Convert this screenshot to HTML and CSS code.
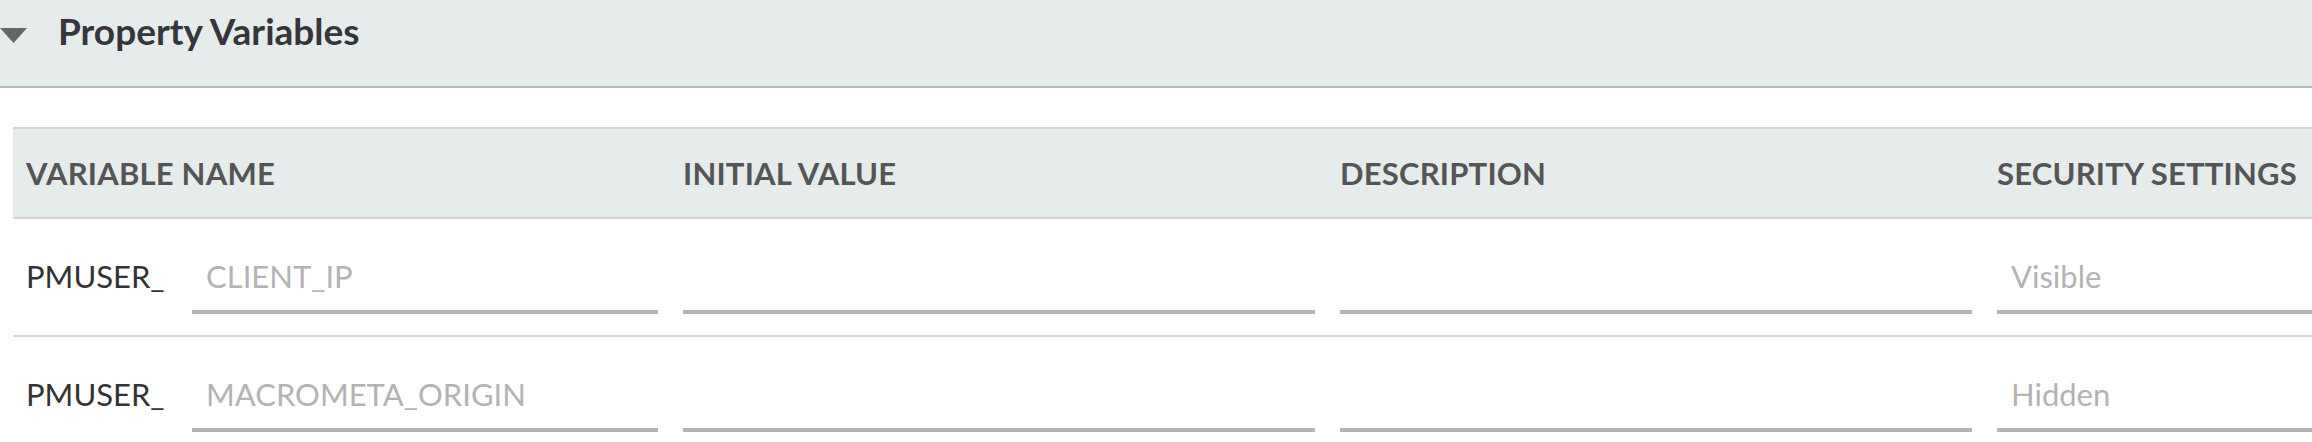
FILE: index.html
```html
<!DOCTYPE html>
<html lang="en">
<head>
<meta charset="utf-8">
<title>Property Variables</title>
<link rel="stylesheet" href="styles.css">
</head>
<body>
<div class="panel">
  <div class="section-header">
    <svg class="caret" width="27" height="15" viewBox="0 0 27 15" aria-hidden="true"><polygon points="0,0 27,0 13.5,15" fill="#666666"/></svg>
    <h2 class="section-title">Property Variables</h2>
  </div>
  <div class="table-wrap">
    <table class="vars">
      <colgroup>
        <col class="col"><col class="col"><col class="col"><col class="col">
      </colgroup>
      <thead>
        <tr>
          <th>VARIABLE NAME</th>
          <th>INITIAL VALUE</th>
          <th>DESCRIPTION</th>
          <th>SECURITY SETTINGS</th>
        </tr>
      </thead>
      <tbody>
        <tr>
          <td><div class="name-cell"><span class="prefix">PMUSER_</span><div class="field"><span class="placeholder">CLIENT_IP</span></div></div></td>
          <td><div class="field"></div></td>
          <td><div class="field"></div></td>
          <td><div class="field"><span class="placeholder">Visible</span></div></td>
        </tr>
        <tr>
          <td><div class="name-cell"><span class="prefix">PMUSER_</span><div class="field"><span class="placeholder">MACROMETA_ORIGIN</span></div></div></td>
          <td><div class="field"></div></td>
          <td><div class="field"></div></td>
          <td><div class="field"><span class="placeholder">Hidden</span></div></td>
        </tr>
      </tbody>
    </table>
  </div>
</div>
</body>
</html>
```

FILE: styles.css
```css
html, body {
  margin: 0;
  padding: 0;
  overflow: hidden;
  background: #ffffff;
}

body {
  font-family: Lato, "Noto Sans", sans-serif;
  color: #333333;
}

.section-header {
  display: flex;
  align-items: flex-start;
  height: 86px;
  background: #e6ecec;
  border-bottom: 2px solid #b4b8b8;
}

.caret {
  flex: none;
  margin-top: 28px;
  display: block;
}

.section-title {
  margin: 10px 0 0 31px;
  font-size: 37px;
  line-height: 42px;
  font-weight: 700;
  color: #35353a;
}

.table-wrap {
  padding: 39px 0 0 13px;
}

.vars {
  border-collapse: separate;
  border-spacing: 0;
  table-layout: fixed;
  width: 2628px;
}

.col {
  width: 657px;
}

.vars th {
  height: 88px;
  padding: 0 12px 0 13px;
  text-align: left;
  vertical-align: middle;
  background: #e6ecec;
  border-top: 2px solid #d2d6d6;
  border-bottom: 2px solid #d2d6d6;
  font-size: 31px;
  font-weight: 700;
  letter-spacing: 0.2px;
  color: #555555;
  white-space: nowrap;
}

.vars td {
  padding: 39px 12px 21px 13px;
  vertical-align: top;
  border-bottom: 2px solid #d8d8d8;
}

.name-cell {
  display: flex;
  align-items: flex-start;
}

.prefix {
  flex: none;
  width: 166px;
  font-size: 31px;
  line-height: 36px;
  color: #333333;
}

.field {
  flex: 1;
  height: 36px;
  padding: 0 0 16px 14px;
  border-bottom: 4px solid #b5b5b5;
}

.placeholder {
  display: block;
  font-size: 31px;
  line-height: 36px;
  color: #b3b3b3;
  white-space: nowrap;
}
```
